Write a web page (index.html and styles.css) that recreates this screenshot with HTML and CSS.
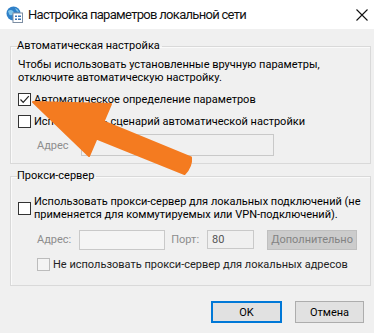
FILE: index.html
```html
<!DOCTYPE html>
<html lang="ru">
<head>
  <meta charset="UTF-8" />
  <title>Настройка параметров локальной сети</title>
  <link rel="stylesheet" href="styles.css">
</head>
<body>
  <div class="window">
    <div class="titlebar">
      <svg class="app-icon" width="17" height="17" viewBox="0 0 17 17">
        <circle cx="7.5" cy="7.5" r="7" fill="#2f80c8"/>
        <path d="M2 5 Q5 3 7 5 Q9 7 6 9 Q4 10 3 8 Z" fill="#7ec4ea"/>
        <path d="M9 2 Q12 3 13 6 Q11 6 10 4 Z" fill="#7ec4ea"/>
        <rect x="7" y="7" width="9.5" height="9.5" fill="#fff" stroke="#7d8ea3"/>
        <rect x="9" y="9.5" width="2" height="1.5" fill="#3a74b5"/>
        <rect x="12" y="9.5" width="3" height="1.5" fill="#3a74b5"/>
        <rect x="9" y="12.5" width="2" height="1.5" fill="#3a74b5"/>
        <rect x="12" y="12.5" width="3" height="1.5" fill="#3a74b5"/>
      </svg>
      <span class="title">Настройка параметров локальной сети</span>
      <svg class="close" width="12" height="12" viewBox="0 0 12 12">
        <path d="M0.5 0.5 L11.5 11.5 M11.5 0.5 L0.5 11.5" stroke="#111" stroke-width="1.1"/>
      </svg>
    </div>

    <div class="content">
      <fieldset class="group group-auto">
        <legend>Автоматическая настройка</legend>
        <p class="note">Чтобы использовать установленные вручную параметры,<br>отключите автоматическую настройку.</p>
        <label class="check first">
          <span class="box">
            <svg width="11" height="11" viewBox="0 0 11 11"><path d="M1.5 5.5 L4.2 8.3 L9.8 2.2" fill="none" stroke="#222" stroke-width="1.2"/></svg>
          </span>
          <span>Автоматическое определение параметров</span>
        </label>
        <label class="check second">
          <span class="box"></span>
          <span>Использовать сценарий автоматической настройки</span>
        </label>
        <div class="field-row script-row">
          <span class="field-label">Адрес</span>
          <span class="input script-input"></span>
        </div>
      </fieldset>

      <fieldset class="group group-proxy">
        <legend>Прокси-сервер</legend>
        <label class="check multiline">
          <span class="box"></span>
          <span>Использовать прокси-сервер для локальных подключений (не<br>применяется для коммутируемых или VPN-подключений).</span>
        </label>
        <div class="field-row proxy-row">
          <span class="field-label">Адрес:</span>
          <span class="input proxy-input"></span>
          <span class="field-label port-label">Порт:</span>
          <span class="input port-input">80</span>
          <span class="btn disabled">Дополнительно</span>
        </div>
        <label class="check bypass">
          <span class="box off"></span>
          <span>Не использовать прокси-сервер для локальных адресов</span>
        </label>
      </fieldset>

      <div class="actions">
        <span class="btn primary ok">OK</span>
        <span class="btn cancel">Отмена</span>
      </div>
    </div>

    <svg class="arrow" width="374" height="333" viewBox="0 0 374 333">
      <path d="M33 102 L111 104 L103.5 121.5 L191 157.5 Q192 166 184.5 174 L96.5 138.5 L89 156 Z" fill="#f47b20" stroke="#f47b20" stroke-width="2" stroke-linejoin="round"/>
    </svg>
  </div>
</body>
</html>
```

FILE: styles.css
```css
* { box-sizing: border-box; }
html, body { margin: 0; padding: 0; }
body {
  width: 374px; height: 333px; overflow: hidden;
  font-family: Roboto, 'Liberation Sans', sans-serif; font-size: 11px; color: #000;
  background: #f0f0f0;
}
.window { position: relative; width: 374px; height: 333px; }

.titlebar {
  height: 29px; background: #fff;
  display: flex; align-items: center;
  padding: 0 0 0 6px;
}
.app-icon { flex: none; margin-right: 5px; }
.title { font-size: 13px; letter-spacing: -0.7px; color: #111; flex: 1; white-space: nowrap; }
.close { flex: none; margin-right: 6px; }

.content { padding: 9px 3px 0 10px; }

.group {
  margin: 0; padding: 0 0 0 7px;
  border: 1px solid #d9d9d9;
  box-shadow: inset 1px 1px 0 #fafafa;
}
.group legend { padding: 0 2px 0 0; margin-left: -1px; line-height: 16px; }
.group-auto { padding-bottom: 7px; }
.group-proxy { margin-top: 4px; padding-bottom: 13px; }

.note { margin: 4px 0 0; line-height: 13px; white-space: nowrap; }

.check { display: flex; align-items: center; gap: 3px; height: 20px; line-height: 13px; white-space: nowrap; }
.check.first { margin-top: 5px; }
.check.second { margin-top: 2px; }
.check.multiline { height: 26px; margin-top: 11px; }
.check.bypass { height: 16px; margin: 6px 0 0 19px; color: #222; }

.box {
  flex: none; width: 13px; height: 13px;
  border: 1px solid #333; background: #fff;
  display: flex; align-items: center; justify-content: center;
}
.box.off { border-color: #bcbcbc; background: #f4f4f4; }

.field-row { display: flex; align-items: center; padding-left: 19px; white-space: nowrap; }
.script-row { margin-top: 3px; height: 22px; }
.proxy-row { margin-top: 8px; height: 21px; }
.field-label { color: #8d8d8d; }

.input {
  display: block; border: 1px solid #c9c9c9; background: #f0f0f0;
  height: 22px; line-height: 18px; padding-left: 3px;
}
.script-input { width: 193px; margin-left: 12px; }
.proxy-input { width: 86px; height: 20px; margin-left: 8px; background: #f5f5f5; }
.port-label { margin-left: 6px; }
.port-input { width: 47px; height: 19px; margin-left: 8px; color: #555; line-height: 17px; padding-left: 4px; }

.btn {
  display: flex; align-items: center; justify-content: center;
  height: 22px; border: 1px solid #adadad; background: #e1e1e1;
}
.btn.disabled {
  width: 90px; height: 20px; margin-left: 13px;
  background: #cccccc; border-color: #bfbfbf; color: #838383;
}

.actions { display: flex; justify-content: flex-end; gap: 13px; margin: 15px 7px 0 0; }
.btn.ok { width: 71px; border: 2px solid #0078d7; }
.btn.cancel { width: 69px; }

.arrow { position: absolute; top: 0; left: 0; pointer-events: none; }
```
